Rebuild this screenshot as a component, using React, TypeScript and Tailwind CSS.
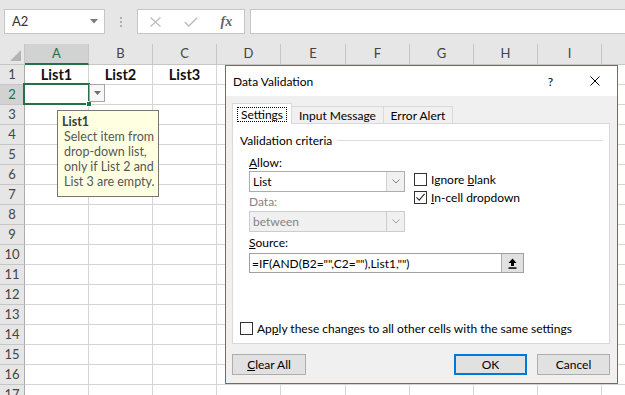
import React from "react";

const COLS: [string, string][] = [
  ["A", "w-[64px]"],
  ["B", "w-[64px]"],
  ["C", "w-[64px]"],
  ["D", "w-[64px]"],
  ["E", "w-[65px]"],
  ["F", "w-[64px]"],
  ["G", "w-[64px]"],
  ["H", "w-[64px]"],
  ["I", "w-[64px]"],
  ["J", "w-[64px]"],
];
const ROWS = Array.from({ length: 17 }, (_, i) => i + 1);

function Checkbox({ checked }: { checked?: boolean }) {
  return (
    <div className="w-[13px] h-[13px] border border-[#333333] bg-white flex items-center justify-center shrink-0">
      {checked && (
        <svg width="11" height="11" viewBox="0 0 11 11">
          <path d="M1.5 5.3 L4.2 8.2 L9.6 1.8" fill="none" stroke="#333333" strokeWidth="1.2" />
        </svg>
      )}
    </div>
  );
}

function Chevron({ color }: { color: string }) {
  return (
    <svg width="8" height="5" viewBox="0 0 8 5">
      <path d="M0.5 0.5 L4 4 L7.5 0.5" fill="none" stroke={color} strokeWidth="1" />
    </svg>
  );
}

export default function App() {
  return (
    <div className="relative w-[625px] h-[395px] overflow-hidden bg-white font-['Lato',sans-serif] text-black">
      {/* toolbar */}
      <div className="h-[44px] bg-[#e6e6e6] flex items-start pt-[9px] pl-[4px]">
        <div className="w-[101px] h-[25px] shrink-0 bg-white border border-[#c6c6c6] flex items-center justify-between pl-[7px] pr-[6px] text-[13px] text-[#333333]">
          <span>A2</span>
          <svg width="8" height="5" viewBox="0 0 8 5">
            <path d="M0 0 H8 L4 4.5 Z" fill="#7a7a7a" />
          </svg>
        </div>
        <div className="w-[32px] h-[25px] shrink-0 flex flex-col items-center justify-center gap-[2px]">
          <div className="w-[2px] h-[2px] bg-[#b0b0b0]" />
          <div className="w-[2px] h-[2px] bg-[#b0b0b0]" />
          <div className="w-[2px] h-[2px] bg-[#b0b0b0]" />
        </div>
        <div className="w-[108px] h-[25px] shrink-0 bg-white border border-[#c6c6c6] flex items-center">
          <div className="w-[36px] flex justify-center">
            <svg width="11" height="10" viewBox="0 0 11 10">
              <path d="M0.5 0.5 L10.5 9.5 M10.5 0.5 L0.5 9.5" stroke="#bdbdbd" strokeWidth="1.3" />
            </svg>
          </div>
          <div className="w-[36px] flex justify-center">
            <svg width="14" height="10" viewBox="0 0 14 10">
              <path d="M0.8 5 L4.8 9 L13.2 0.7" fill="none" stroke="#bdbdbd" strokeWidth="1.5" />
            </svg>
          </div>
          <div className="w-[36px] flex justify-center">
            <span className="italic font-bold font-['Liberation_Serif',serif] text-[14px] leading-none text-[#666666]">fx</span>
          </div>
        </div>
        <div className="ml-[5px] flex-1 h-[25px] bg-white border border-r-0 border-[#c6c6c6]" />
      </div>

      {/* column headers */}
      <div className="flex h-[21px] bg-[#e6e6e6]">
        <div className="w-[25px] shrink-0 border-r border-b border-[#c6c6c6] flex items-end justify-end pr-[3px] pb-[3px]">
          <svg width="11" height="11" viewBox="0 0 11 11">
            <path d="M11 0 L11 11 L0 11 Z" fill="#b4b4b4" />
          </svg>
        </div>
        {COLS.map(([c, w]) => (
          <div
            key={c}
            className={
              c === "A"
                ? `${w} shrink-0 border-r border-r-[#c6c6c6] border-b-2 border-b-[#217346] bg-[#d2d2d2] text-[#217346] flex items-center justify-center text-[13px]`
                : `${w} shrink-0 border-r border-b border-[#c6c6c6] text-[#444444] flex items-center justify-center text-[13px]`
            }
          >
            {c === "J" ? "" : c}
          </div>
        ))}
      </div>

      {/* rows */}
      {ROWS.map((r) => (
        <div key={r} className="flex h-[20px]">
          <div
            className={
              r === 2
                ? "w-[25px] shrink-0 border-r border-b border-r-[#ababab] border-b-[#c6c6c6] bg-[#d2d2d2] text-[#217346] flex items-center justify-center text-[13px]"
                : "w-[25px] shrink-0 border-r border-b border-r-[#ababab] border-b-[#c6c6c6] bg-[#e6e6e6] text-[#444444] flex items-center justify-center text-[13px]"
            }
          >
            {r}
          </div>
          {COLS.map(([c, w], i) => (
            <div
              key={c}
              className={`${w} shrink-0 border-r border-b border-[#d4d4d4] flex items-center justify-center text-[14.5px] font-bold text-[#111111]`}
            >
              {r === 1 && i < 3 ? `List${i + 1}` : ""}
            </div>
          ))}
        </div>
      ))}

      {/* selection */}
      <div className="absolute left-[23px] top-[83px] w-[67px] h-[22px] border-2 border-[#217346]" />
      <div className="absolute left-[86px] top-[101px] w-[6px] h-[6px] bg-[#217346] border border-white" />
      <div className="absolute left-[89px] top-[84px] w-[16px] h-[18px] bg-[#f7f7f7] border border-[#a6a6a6] flex items-center justify-center">
        <svg width="7" height="4" viewBox="0 0 7 4">
          <path d="M0 0 H7 L3.5 4 Z" fill="#6f6f6f" />
        </svg>
      </div>

      {/* tooltip */}
      <div className="absolute left-[57px] top-[110px] w-[102px] h-[87px] bg-[#ffffe1] border border-[#767676] pl-[4px] pt-[3px] text-[12.5px] leading-[15px] text-[#575757]">
        <div className="font-bold text-[#3c3c3c]">List1</div>
        <div className="pl-[2px]">
          Select item from
          <br />
          drop-down list,
          <br />
          only if List 2 and
          <br />
          List 3 are empty.
        </div>
      </div>

      {/* dialog */}
      <div className="absolute left-[225px] top-[65px] w-[393px] h-[319px] border border-[#1883d7] flex flex-col text-[12px] leading-[15px]">
        <div className="h-[30px] shrink-0 bg-white flex items-center pl-[7px] pr-[17px]">
          <span>Data Validation</span>
          <span className="ml-auto">?</span>
          <svg className="ml-[37px]" width="10" height="10" viewBox="0 0 10 10">
            <path d="M0.5 0.5 L9.5 9.5 M9.5 0.5 L0.5 9.5" stroke="#000000" strokeWidth="1" />
          </svg>
        </div>
        <div className="flex-1 bg-[#f0f0f0] pt-[7px] px-[6px] flex flex-col">
          {/* tabs */}
          <div className="flex items-end h-[20px] relative z-10">
            <div className="w-[60px] h-[21px] -mb-px bg-white border-l border-t border-r border-[#d9d9d9] flex items-center justify-center">
              <span className="h-[15px] px-[3px] border border-dotted border-black flex items-center">Settings</span>
            </div>
            <div className="w-[92px] h-[17px] border-t border-r border-[#d9d9d9] flex items-center justify-center">
              Input Message
            </div>
            <div className="w-[69px] h-[17px] border-t border-r border-[#d9d9d9] flex items-center justify-center">
              Error Alert
            </div>
          </div>

          {/* panel */}
          <div className="w-[378px] h-[221px] bg-white border border-[#d9d9d9] flex flex-col pl-[7px] pr-[6px]">
            <div className="mt-[8px] h-[16px] flex items-center">
              <span>Validation criteria</span>
              <div className="flex-1 ml-[5px] h-px bg-[#dcdcdc]" />
            </div>
            <div className="pl-[9px] flex">
              <div className="w-[156px] flex flex-col">
                <div className="h-[23px] flex items-end pb-[1px]">
                  <span>
                    <span className="underline">A</span>llow:
                  </span>
                </div>
                <div className="h-[21px] flex border border-[#adadad] bg-white">
                  <div className="flex-1 flex items-center pl-[3px]">List</div>
                  <div className="w-[18px] border-l border-[#d0d0d0] bg-[#f0f0f0] flex items-center justify-center">
                    <Chevron color="#808080" />
                  </div>
                </div>
                <div className="h-[19px] flex items-center text-[#838383]">Data:</div>
                <div className="h-[21px] flex border border-[#cccccc] bg-[#f0f0f0] text-[#838383]">
                  <div className="flex-1 flex items-center pl-[3px]">between</div>
                  <div className="w-[18px] border-l border-[#cccccc] flex items-center justify-center">
                    <Chevron color="#a0a0a0" />
                  </div>
                </div>
              </div>
              <div className="ml-[9px] mt-[22px] flex flex-col">
                <div className="h-[18px] flex items-center gap-[4px]">
                  <Checkbox />
                  <span>
                    Ignore <span className="underline">b</span>lank
                  </span>
                </div>
                <div className="h-[18px] flex items-center gap-[4px]">
                  <Checkbox checked />
                  <span>
                    <span className="underline">I</span>n-cell dropdown
                  </span>
                </div>
              </div>
            </div>
            <div className="pl-[9px] flex flex-col">
              <div className="h-[21px] flex items-center">
                <span>
                  <span className="underline">S</span>ource:
                </span>
              </div>
              <div className="w-[275px] h-[20px] flex border border-[#a0a0a0] bg-white">
                <div className="flex-1 flex items-center pl-[2px] whitespace-nowrap">=IF(AND(B2="",C2=""),List1,"")</div>
                <div className="w-[22px] bg-[#e1e1e1] border-l border-[#adadad] flex items-center justify-center">
                  <svg width="9" height="11" viewBox="0 0 9 11">
                    <path d="M4.5 0.5 L8.5 5 H6 V8 H3 V5 H0.5 Z" fill="#000000" />
                    <rect x="0.5" y="9.3" width="8" height="1.5" fill="#000000" />
                  </svg>
                </div>
              </div>
            </div>
            <div className="mt-auto mb-[7px] h-[16px] flex items-center gap-[4px]">
              <Checkbox />
              <span>
                Ap<span className="underline">p</span>ly these changes to all other cells with the same settings
              </span>
            </div>
          </div>

          {/* buttons */}
          <div className="mt-[10px] w-[378px] h-[21px] flex">
            <div className="w-[74px] h-[21px] bg-[#e1e1e1] border border-[#adadad] flex items-center justify-center">
              <span>
                <span className="underline">C</span>lear All
              </span>
            </div>
            <div className="ml-auto w-[73px] h-[21px] bg-[#e1e1e1] border-2 border-[#0078d7] flex items-center justify-center">
              OK
            </div>
            <div className="ml-[10px] w-[73px] h-[21px] bg-[#e1e1e1] border border-[#adadad] flex items-center justify-center">
              Cancel
            </div>
          </div>
        </div>
      </div>
    </div>
  );
}
